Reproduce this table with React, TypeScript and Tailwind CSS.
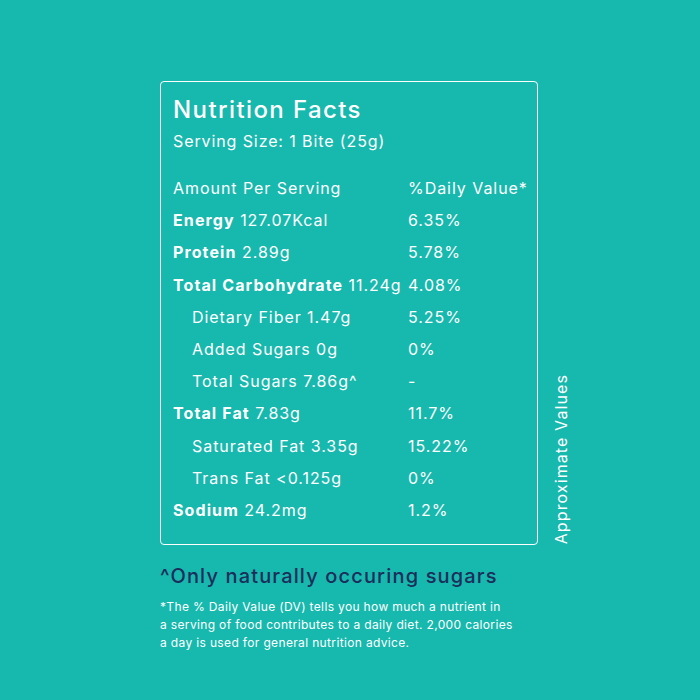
import React from "react";

const rows: { label: string; value: string; dv: string; bold?: boolean; indent?: boolean }[] = [
  { label: "Energy", value: "127.07Kcal", dv: "6.35%", bold: true },
  { label: "Protein", value: "2.89g", dv: "5.78%", bold: true },
  { label: "Total Carbohydrate", value: "11.24g", dv: "4.08%", bold: true },
  { label: "Dietary Fiber", value: "1.47g", dv: "5.25%", indent: true },
  { label: "Added Sugars", value: "0g", dv: "0%", indent: true },
  { label: "Total Sugars", value: "7.86g^", dv: "-", indent: true },
  { label: "Total Fat", value: "7.83g", dv: "11.7%", bold: true },
  { label: "Saturated Fat", value: "3.35g", dv: "15.22%", indent: true },
  { label: "Trans Fat", value: "<0.125g", dv: "0%", indent: true },
  { label: "Sodium", value: "24.2mg", dv: "1.2%", bold: true },
];

export default function App() {
  return (
    <div
      className="w-[700px] h-[700px] bg-[#17b8ad] text-white flex flex-col pt-[81px] pl-[160px]"
      style={{ fontFamily: "Inter, 'Noto Sans', sans-serif" }}
    >
      <div className="flex">
        <div className="w-[378px] h-[464px] border-[1.5px] border-white rounded-[4px] pl-[12px] pt-[13px]">
          <div className="text-[24px] leading-[30px] font-medium tracking-[1.4px]">Nutrition Facts</div>
          <div className="text-[16px] leading-[22px] mt-[5px] tracking-[0.9px]">Serving Size: 1 Bite (25g)</div>
          <div className="mt-[20px] flex flex-col tracking-[0.95px]">
            <div className="flex h-[32.2px] items-center text-[16px]">
              <div className="w-[235px]">Amount Per Serving</div>
              <div>%Daily Value*</div>
            </div>
            {rows.map((r) => (
              <div key={r.label} className="flex h-[32.2px] items-center text-[16px]">
                <div className={r.indent ? "w-[235px] pl-[19px] whitespace-nowrap" : "w-[235px] whitespace-nowrap"}>
                  {r.bold ? <span className="font-bold tracking-[1.1px]">{r.label}</span> : r.label} {r.value}
                </div>
                <div>{r.dv}</div>
              </div>
            ))}
          </div>
        </div>
        <div className="self-end ml-[14px] mb-[1px] [writing-mode:vertical-rl] rotate-180 text-[16px] leading-[18px] tracking-[1.1px]">
          Approximate Values
        </div>
      </div>
      <div className="mt-[18px] text-[20px] leading-[26px] text-[#1c2d5b] font-medium tracking-[1.15px]">^Only naturally occuring sugars</div>
      <div className="mt-[9px] text-[12px] leading-[18px] tracking-[0.35px] whitespace-nowrap">
        *The % Daily Value (DV) tells you how much a nutrient in
        <br />
        a serving of food contributes to a daily diet. 2,000 calories
        <br />
        a day is used for general nutrition advice.
      </div>
    </div>
  );
}
